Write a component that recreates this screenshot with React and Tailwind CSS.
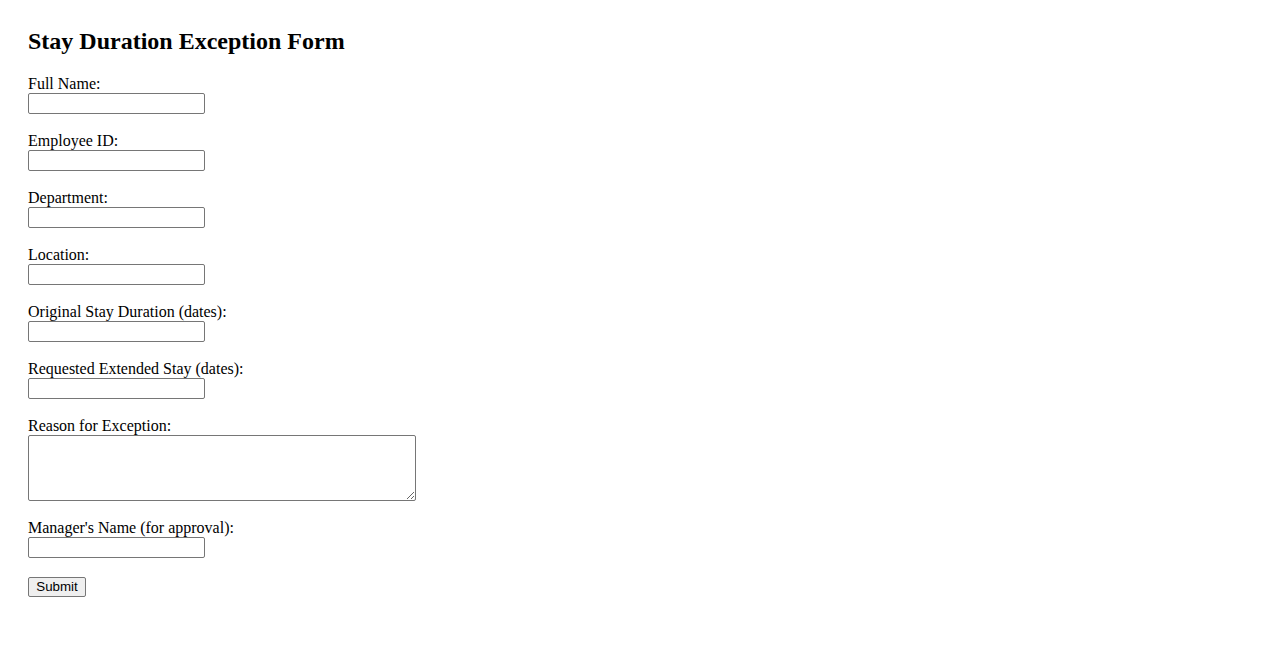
import React from 'react';

const fields = [
  { id: 'fullName', label: 'Full Name:' },
  { id: 'employeeId', label: 'Employee ID:' },
  { id: 'department', label: 'Department:' },
  { id: 'location', label: 'Location:' },
  { id: 'originalStay', label: 'Original Stay Duration (dates):' },
  { id: 'extendedStay', label: 'Requested Extended Stay (dates):' },
  { id: 'reason', label: 'Reason for Exception:', textarea: true },
  { id: 'manager', label: "Manager's Name (for approval):" },
];

const App = () => {
  return (
    <div className="min-h-[650px] bg-white pl-[28px] pt-[27px] font-['Liberation_Serif',serif] text-black">
      <h2 className="mb-[20px] text-[24px] font-bold leading-[28px]">Stay Duration Exception Form</h2>

      <form onSubmit={(e) => e.preventDefault()}>
        {fields.map((f) => (
          <div key={f.id} className="mb-[18px] flex flex-col items-start">
            <label htmlFor={f.id} className="text-[16px] leading-[18px]">
              {f.label}
            </label>
            {f.textarea ? (
              <textarea
                id={f.id}
                className="h-[66px] w-[388px] resize rounded-[2px] border border-[#767676] bg-white"
              />
            ) : (
              <input
                id={f.id}
                type="text"
                className="h-[21px] w-[177px] rounded-[2px] border border-[#767676] bg-white px-[2px] font-['Liberation_Sans',sans-serif] text-[13.33px]"
              />
            )}
          </div>
        ))}

        {/* sibling margins collapse, so 19px here = gap below last input */}
        <button
          type="submit"
          className="mt-[19px] block h-[20px] w-[58px] rounded-[2px] border border-[#767676] bg-[#efefef] font-['Liberation_Sans',sans-serif] text-[13.33px] leading-[16px] text-black"
        >
          Submit
        </button>
      </form>
    </div>
  );
};

export default App;
